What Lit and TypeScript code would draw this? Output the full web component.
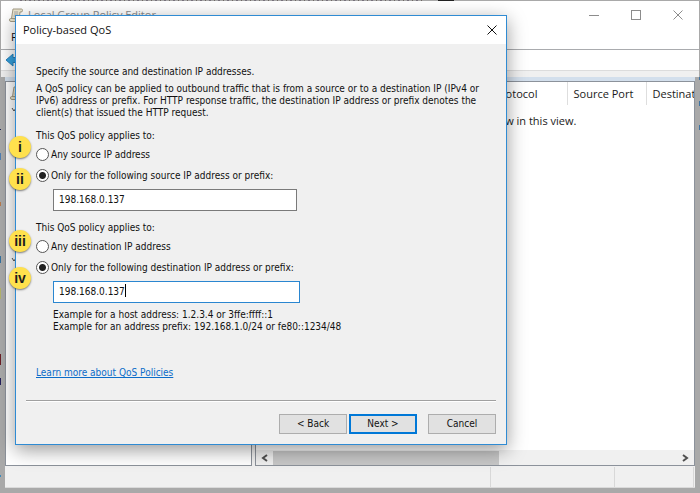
import { LitElement, html, css, svg } from "lit";
import { customElement, property } from "lit/decorators.js";

const UI = css`"Open Sans", "Noto Sans", sans-serif`;
const DLG = css`"DejaVu Sans Condensed", "DejaVu Sans", sans-serif`;

const scrollIcon = html`<svg width="14" height="14" viewBox="0 0 14 14" aria-hidden="true">
  <path d="M4 1h8.500q1 0 1 1.500t-1.500 1.500h-1l-1 8q0 1.500-1.500 1.500H2Q.5 13.500.5 12t1-1.500h1z" fill="#ece6cf" stroke="#a49c86"/>
  <path d="M5 4h4M5 6h4M4.500 8h4" stroke="#aaa" fill="none"/>
  <path d="M2 10.500h6q1 1.500.5 3" stroke="#a49c86" fill="#d9d0b0"/>
</svg>`;

const chevron = (d: string, w = 2) => html`<svg width="7" height="8" viewBox="0 0 7 8" aria-hidden="true">
  ${svg`<path d=${d} fill="none" stroke="#505050" stroke-width=${w}/>`}
</svg>`;

@customElement("editor-window")
export class EditorWindow extends LitElement {
  static styles = css`
    :host { display: flex; flex-direction: column; font: 11px/16px ${UI}; color: #1a1a1a; }
    .frame { display: flex; flex-direction: column; height: 76px; box-sizing: border-box; background: #fff; }
    .title { display: flex; align-items: center; gap: 5px; height: 28px; padding-left: 8px; color: #8c8c8c; }
    .title .name { flex: 1; }
    .title button { width: 42px; height: 28px; padding: 0; border: 0; background: none; color: #8c8c8c; }
    .menu { height: 20px; padding-left: 10px; border-bottom: 1px solid #a9abae; }
    .menu button { font: inherit; color: #111; border: 0; padding: 0; background: none; }
    .tools { display: flex; align-items: center; height: 20px; padding-left: 4px; border-bottom: 1px solid #dcdcdc; }
    .tools button { display: flex; border: 0; padding: 0; background: none; }
    .edge { flex: 1; background: #f0f0f0; }
    .body { flex: 1; display: flex; flex-direction: column; margin: 0 4px; background: #f0f0f0; }
    .panes { flex: 1; display: grid; grid-template-columns: 247fr 440fr; gap: 3px; border-top: 4px solid #d3dfec; }
    .pane { background: #fff; border: 1px solid #8c929b; display: flex; flex-direction: column; min-width: 0; overflow: hidden; }
    .tree { justify-content: flex-start; padding: 4px; gap: 6px; }
    .tree .far { margin-top: 132px; }
    .tree svg { flex: none; }
    table { width: 100%; table-layout: fixed; border-collapse: collapse; }
    th { box-sizing: border-box; font-weight: 400; text-align: left; height: 23px; padding: 1px 0 0 6px; border-left: 1px solid #dedede; white-space: nowrap; overflow: hidden; }
    th:first-child { border-left: 0; }
    .wide { width: 79px; }
    .last { width: 48px; }
    td { text-align: center; padding: 8px 0 0; }
    .grow { flex: 1; }
    .bar { display: flex; align-items: center; height: 15px; background: #f0f0f0; padding: 0 5px; gap: 5px; }
    .track { flex: 1; height: 14px; }
    .thumb { width: 56%; height: 14px; background: #c8c8c8; }
    .status { display: grid; grid-template-columns: 1fr 124px 79px; height: 20px; margin-top: 1px; padding-right: 1px; border-bottom: 1px solid #dadada; }
    .status span { border-right: 1px solid #d8d8d8; }
  `;
  render() {
    return html`
      <div class="frame">
        <div class="title">
          ${scrollIcon}<span class="name">Local Group Policy Editor</span>
          <div>
            <button aria-label="Minimize"><svg width="10" height="10"><path d="M0 5.500h10" stroke="currentColor"/></svg></button><button
            aria-label="Maximize"><svg width="10" height="10"><rect x=".5" y=".5" width="9" height="9" fill="none" stroke="currentColor"/></svg></button><button
            aria-label="Close"><svg width="10" height="10"><path d="M.5.5l9 9m0-9l-9 9" stroke="currentColor"/></svg></button>
          </div>
        </div>
        <div class="menu"><button>File</button></div>
        <div class="tools"><button aria-label="Back">
          <svg width="16" height="14" viewBox="0 0 16 14"><path d="M1 7l7-6v3.500h7v5H8V13z" fill="#35a3e0" stroke="#2b83bd"/></svg>
        </button></div>
        <div class="edge"></div>
      </div>
      <div class="body">
        <div class="panes">
          <div class="pane tree">
            ${scrollIcon} ${chevron("M2 2l2 3 2-3", 1)}
            <div class="far">${chevron("M2 2l2 3 2-3", 1)}</div>
          </div>
          <div class="pane">
            <table>
              <thead><tr><th></th><th class="wide">Protocol</th><th class="wide">Source Port</th><th class="last">Destination</th></tr></thead>
              <tbody><tr><td colspan="4">There are no items to show in this view.</td></tr></tbody>
            </table>
            <div class="grow"></div>
            <div class="bar">
              ${chevron("M6 1l-4 3 4 3")}
              <div class="track"><div class="thumb"></div></div>
              ${chevron("M1 1l4 3-4 3")}
            </div>
          </div>
        </div>
        <div class="status"><span></span><span></span><span></span></div>
      </div>`;
  }
}

@customElement("address-choice")
export class AddressChoice extends LitElement {
  @property() kind = "source";
  @property({ type: Boolean }) active = false;
  static styles = css`
    :host { display: block; }
    fieldset { margin: 0; padding: 0; border: 0; min-width: 0; }
    legend { padding: 0; margin-bottom: 6px; }
    label { display: flex; align-items: center; gap: 2px; height: 13px; margin-bottom: 8px; }
    .only { margin-bottom: 7px; }
    input[type="radio"] { appearance: none; flex: none; width: 13px; height: 13px; margin: 0; border: 1px solid #555; border-radius: 50%; background: #fff; }
    input[type="radio"]:checked { background: radial-gradient(circle, #222 3px, #fff 4px); }
    .hot { border-color: #3f7fae; }
    .box { position: relative; margin-left: 17px; width: 244px; }
    .box.active { width: 247px; }
    input[type="text"] { display: block; box-sizing: border-box; width: 100%; height: 22px; padding: 0 5px 2px; border: 1px solid #7a7a7a; border-radius: 0; outline: 0; background: #fff; font: 10px/12px ${DLG}; color: #111; }
    .active input[type="text"] { border-color: #2a86d0; }
    .caret { position: absolute; left: 72px; top: 3px; width: 1px; height: 13px; background: #000; }
  `;
  render() {
    const src = this.kind === "source";
    return html`<fieldset>
      <legend>This QoS policy applies to:</legend>
      <label><input type="radio" name="mode" class=${src ? "hot" : ""}>Any ${this.kind} IP address</label>
      <label class="only"><input type="radio" name="mode" checked>Only for the following ${this.kind} IP address or prefix:</label>
      <div class="box ${this.active ? "active" : ""}">
        <input type="text" aria-label="${this.kind} IP address or prefix" value="198.168.0.137">
        ${this.active ? html`<span class="caret"></span>` : ""}
      </div>
    </fieldset>`;
  }
}

@customElement("qos-dialog")
export class QosDialog extends LitElement {
  static styles = css`
    :host { display: block; box-sizing: border-box; border: 1px solid #2f8bd3; background: #f0f0f0; box-shadow: 0 5px 18px rgba(0, 0, 0, 0.4); font: 10px/12px ${DLG}; color: #111; }
    header { display: flex; align-items: center; justify-content: space-between; height: 28px; padding: 0 9px 0 7px; background: #fff; }
    h1 { margin: 0; font: 11px/16px ${UI}; }
    header button { display: flex; padding: 0; border: 0; background: none; }
    main { padding: 22px 20px 0; }
    p { margin: 0 0 5px; }
    .intro { margin-bottom: 11px; }
    address-choice + address-choice { margin-top: 11px; }
    .example { margin: 6px 0 34px 17px; }
    a { color: #0b6cc9; }
    footer { display: flex; justify-content: flex-end; gap: 2px; margin: 21px 10px 0; padding: 13px 0 10px; border-top: 1px solid #a0a0a0; box-shadow: inset 0 1px #fff; }
    footer button { box-sizing: border-box; width: 68px; height: 20px; padding: 0; border: 1px solid #adadad; background: #e1e1e1; font: inherit; color: #111; }
    footer .next { border: 2px solid #0078d7; }
    footer .cancel { margin-left: 9px; }
  `;
  render() {
    return html`
      <header>
        <h1>Policy-based QoS</h1>
        <button aria-label="Close"><svg width="10" height="10"><path d="M.5.5l9 9m0-9l-9 9" stroke="#111"/></svg></button>
      </header>
      <main>
        <p>Specify the source and destination IP addresses.</p>
        <p class="intro">A QoS policy can be applied to outbound traffic that is from a source or to a destination IP (IPv4 or IPv6) address or prefix. For HTTP response traffic, the destination IP address or prefix denotes the client(s) that issued the HTTP request.</p>
        <address-choice kind="source"></address-choice>
        <address-choice kind="destination" active></address-choice>
        <p class="example">Example for a host address: 1.2.3.4 or 3ffe:ffff::1<br>Example for an address prefix: 192.168.1.0/24 or fe80::1234/48</p>
        <a href="#">Learn more about QoS Policies</a>
      </main>
      <footer>
        <button>&lt; Back</button>
        <button class="next">Next &gt;</button>
        <button class="cancel">Cancel</button>
      </footer>`;
  }
}

const markers = [
  { text: "i", top: 136 },
  { text: "ii", top: 168 },
  { text: "iii", top: 230 },
  { text: "iv", top: 267 },
];

@customElement("app-root")
export class AppRoot extends LitElement {
  static styles = css`
    :host {
      display: flex; flex-direction: column; position: relative; box-sizing: border-box; min-height: 100vh; padding: 1px 1px 5px; overflow: hidden;
      background:
        repeating-linear-gradient(90deg, #77717c 0 2px, #a9a9a9 2px 5px, #6f6864 5px 6px, #a9a9a9 6px 9px) 20px 0 / 405px 1px no-repeat,
        linear-gradient(#222, #222) 438px 0 / 16px 1px no-repeat,
        linear-gradient(#1d2250, #1d2250) 0 129px / 1px 1px no-repeat,
        linear-gradient(#4f7fb5, #4f7fb5) 0 153px / 1px 7px no-repeat,
        linear-gradient(#b87a4d, #b87a4d) 0 202px / 1px 4px no-repeat,
        linear-gradient(#35719f, #35719f) 0 256px / 1px 7px no-repeat,
        linear-gradient(#b5b56c, #b5b56c) 0 288px / 1px 11px no-repeat,
        linear-gradient(#6b1f26, #6b1f26) 0 354px / 1px 11px no-repeat,
        linear-gradient(#24205c, #24205c) 0 378px / 1px 7px no-repeat,
        linear-gradient(#3a8bbd, #3a8bbd) 0 475px / 1px 2px no-repeat,
        linear-gradient(#3f74a3, #3f74a3) 100% 77px / 1px 3px no-repeat,
        linear-gradient(#3f74a3, #3f74a3) 100% 101px / 1px 5px no-repeat,
        linear-gradient(#3f74a3, #3f74a3) 100% 125px / 1px 5px no-repeat,
        #a9a9a9;
    }
    editor-window { flex: 1; }
    qos-dialog { position: absolute; left: 15px; top: 15px; width: calc(100% - 30px); max-width: 492px; }
    .marker { position: absolute; left: 9px; width: 22px; height: 22px; border-radius: 50%; background: #ffe14d; box-shadow: 0 1px 2px rgba(0, 0, 0, 0.5); font: 700 14px/22px "Liberation Sans", sans-serif; text-align: center; color: #1d1d1d; }
  `;
  render() {
    return html`
      <editor-window></editor-window>
      <qos-dialog></qos-dialog>
      ${markers.map((m) => html`<span class="marker" style="top:${m.top}px">${m.text}</span>`)}`;
  }
}
